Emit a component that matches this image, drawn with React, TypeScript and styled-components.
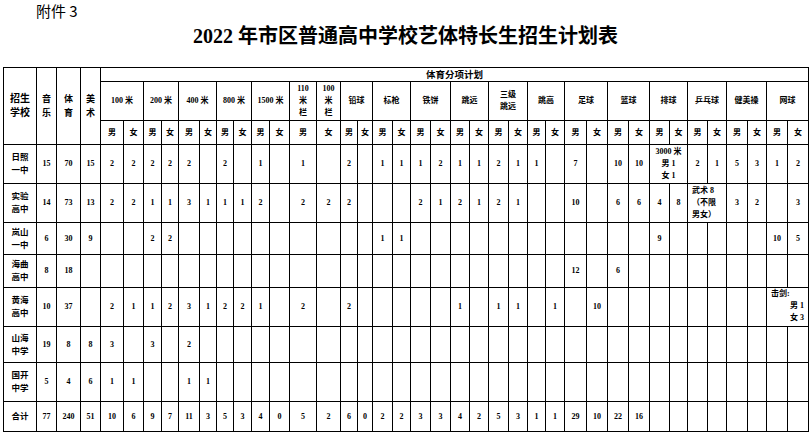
import styled, { createGlobalStyle } from "styled-components"

const GlobalStyle = createGlobalStyle`
  body {
    margin: 0;
    background: #fff;
  }
`

type Align = "left" | "right" | "center"
type Merge = { span: number; lines: { t: string; a?: Align }[]; top?: boolean }
type Val = string | number | Merge

const B = ""
const blanks = (n: number): Val[] => Array(n).fill(B)

// column edges measured off the scan
const edges = [3, 36, 56, 80, 100, 123, 143, 161, 178, 199, 216, 233, 251, 269, 289, 316, 340, 357, 372, 392, 410, 430, 450, 469, 488, 508, 527, 545, 564, 586, 607, 628, 649, 669, 687, 707, 726, 747, 766, 787, 808]
const widths = edges.slice(1).map((e, i) => e - edges[i])

const sports: { name: string[]; subs: string[] }[] = [
    { name: ["100 米"], subs: ["男", "女"] },
    { name: ["200 米"], subs: ["男", "女"] },
    { name: ["400 米"], subs: ["男", "女"] },
    { name: ["800 米"], subs: ["男", "女"] },
    { name: ["1500 米"], subs: ["男", "女"] },
    { name: ["110", "米", "栏"], subs: ["男"] },
    { name: ["100", "米", "栏"], subs: ["女"] },
    { name: ["铅球"], subs: ["男", "女"] },
    { name: ["标枪"], subs: ["男", "女"] },
    { name: ["铁饼"], subs: ["男", "女"] },
    { name: ["跳远"], subs: ["男", "女"] },
    { name: ["三级", "跳远"], subs: ["男", "女"] },
    { name: ["跳高"], subs: ["男", "女"] },
    { name: ["足球"], subs: ["男", "女"] },
    { name: ["篮球"], subs: ["男", "女"] },
    { name: ["排球"], subs: ["男", "女"] },
    { name: ["乒乓球"], subs: ["男", "女"] },
    { name: ["健美操"], subs: ["男", "女"] },
    { name: ["网球"], subs: ["男", "女"] },
]

const volley: Merge = { span: 2, lines: [{ t: "3000 米" }, { t: "男 1" }, { t: "女 1" }] }
const wushu: Merge = {
    span: 2,
    lines: [{ t: "武术 8", a: "left" }, { t: "（不限", a: "left" }, { t: "男女）", a: "left" }],
}
const fencing: Merge = {
    span: 2,
    top: true,
    lines: [{ t: "击剑:", a: "left" }, { t: "男 1", a: "right" }, { t: "女 3", a: "right" }],
}

const rows: { h: number; school: string[]; vals: Val[] }[] = [
    {
        h: 39, school: ["日照", "一中"],
        vals: [15, 70, 15, 2, 2, 2, 2, 2, B, 2, B, 1, B, 1, B, 2, B, 1, 1, 1, 2, 1, 1, 2, 1, 1, B, 7, B, 10, 10, volley, 2, 1, 5, 3, 1, 2],
    },
    {
        h: 39, school: ["实验", "高中"],
        vals: [14, 73, 13, 2, 2, 1, 1, 3, 1, 1, 1, 2, B, 2, 2, 2, B, B, B, 2, 1, 2, 1, 2, 1, B, B, 10, B, 6, 6, 4, 8, wushu, 3, 2, B, 3],
    },
    {
        h: 32, school: ["岚山", "一中"],
        vals: [6, 30, 9, B, B, 2, 2, ...blanks(6), B, B, B, B, 1, 1, ...blanks(8), ...blanks(4), 9, B, B, B, B, B, 10, 5],
    },
    {
        h: 33, school: ["海曲", "高中"],
        vals: [8, 18, B, ...blanks(10), B, B, ...blanks(12), 12, B, 6, B, ...blanks(8)],
    },
    {
        h: 39, school: ["黄海", "高中"],
        vals: [10, 37, B, 2, 1, 1, 2, 3, 1, 2, 2, 1, B, 2, B, 2, B, B, B, B, B, 1, B, 1, 1, B, 1, B, 10, B, B, ...blanks(6), fencing],
    },
    {
        h: 36, school: ["山海", "中学"],
        vals: [19, 8, 8, 3, B, 3, B, 2, B, B, B, B, B, ...blanks(26)],
    },
    {
        h: 39, school: ["国开", "中学"],
        vals: [5, 4, 6, 1, 1, B, B, 1, 1, B, B, B, B, ...blanks(26)],
    },
    {
        h: 30, school: ["合计"],
        vals: [77, 240, 51, 10, 6, 9, 7, 11, 3, 5, 3, 4, 0, 5, 2, 6, 0, 2, 2, 3, 3, 4, 2, 5, 3, 1, 1, 29, 10, 22, 16, ...blanks(8)],
    },
]

const Page = styled.div`
    width: 811px;
    height: 435px;
    overflow: hidden;
    background: #fff;
    color: #000;
`

const Annex = styled.div`
    height: 22px;
    line-height: 22px;
    padding-left: 36px;
    font-family: "Noto Sans CJK SC", sans-serif;
    font-size: 15px;
`

const Title = styled.h1`
    margin: 0;
    height: 28px;
    line-height: 28px;
    text-align: center;
    font-family: "Liberation Serif", "Noto Sans CJK SC", serif;
    font-size: 20px;
    font-weight: 700;
`

const Table = styled.table`
    margin: 17px 0 0 3px;
    width: 805px;
    border-collapse: collapse;
    table-layout: fixed;
`

const Row = styled.tr<{ $h: number }>`
    height: ${(p) => p.$h}px;
`

const Cell = styled.td<{ $size?: number; $top?: boolean }>`
    border: 1px solid #000;
    padding: 0;
    text-align: center;
    vertical-align: ${(p) => (p.$top ? "top" : "middle")};
    font-family: "Liberation Serif", "Noto Sans CJK SC", serif;
    font-weight: 700;
    font-size: ${(p) => p.$size ?? 8}px;
    line-height: 12px;
    white-space: nowrap;
    overflow: hidden;
`

const Line = styled.div<{ $align?: Align }>`
    text-align: ${(p) => p.$align ?? "center"};
    padding: 0 4px;
`

const Stack = ({ lines, size }: { lines: string[]; size?: number }) => (
    <>
        {lines.map((l, i) => (
            <div key={i} style={size ? { lineHeight: `${size}px` } : undefined}>{l}</div>
        ))}
    </>
)

const isMerge = (v: Val): v is Merge => typeof v === "object"

export default function App() {
    return (
        <Page>
            <GlobalStyle />
            <Annex>附件 3</Annex>
            <Title>2022 年市区普通高中学校艺体特长生招生计划表</Title>
            <Table>
                <colgroup>
                    {widths.map((w, i) => (
                        <col key={i} style={{ width: w }} />
                    ))}
                </colgroup>
                <thead>
                    <Row $h={14}>
                        <Cell rowSpan={3} $size={10}>
                            <Stack lines={["招生", "学校"]} size={14} />
                        </Cell>
                        <Cell rowSpan={3} $size={9}>
                            <Stack lines={["音", "乐"]} size={14} />
                        </Cell>
                        <Cell rowSpan={3} $size={9}>
                            <Stack lines={["体", "育"]} size={14} />
                        </Cell>
                        <Cell rowSpan={3} $size={9}>
                            <Stack lines={["美", "术"]} size={14} />
                        </Cell>
                        <Cell colSpan={36} $size={9.5}>体育分项计划</Cell>
                    </Row>
                    <Row $h={39}>
                        {sports.map((s) => (
                            <Cell key={s.name.join("")} colSpan={s.subs.length}>
                                <Stack lines={s.name} />
                            </Cell>
                        ))}
                    </Row>
                    <Row $h={24}>
                        {sports.flatMap((s) =>
                            s.subs.map((sub, j) => <Cell key={s.name.join("") + j}>{sub}</Cell>)
                        )}
                    </Row>
                </thead>
                <tbody>
                    {rows.map((r) => (
                        <Row key={r.school.join("")} $h={r.h}>
                            <Cell $size={8.5}>
                                <Stack lines={r.school} size={13} />
                            </Cell>
                            {r.vals.map((v, i) =>
                                isMerge(v) ? (
                                    <Cell key={i} colSpan={v.span} $top={v.top}>
                                        {v.lines.map((l, k) => (
                                            <Line key={k} $align={l.a}>{l.t}</Line>
                                        ))}
                                    </Cell>
                                ) : (
                                    <Cell key={i}>{v}</Cell>
                                )
                            )}
                        </Row>
                    ))}
                </tbody>
            </Table>
        </Page>
    )
}
